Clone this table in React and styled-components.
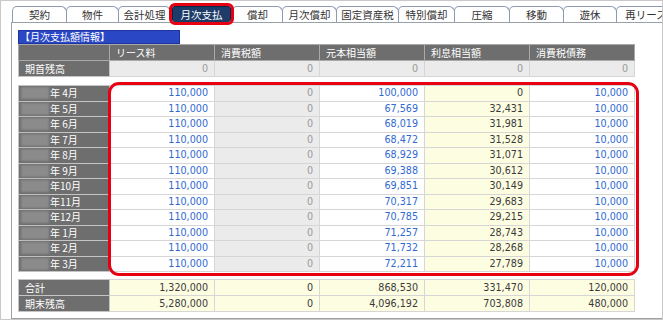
import React from "react";
import styled, { createGlobalStyle, css } from "styled-components";

const GlobalStyle = createGlobalStyle`
    html, body {
        margin : 0;
        padding : 0;
        background : #ffffff;
    }
`

const Frame = styled.div`
    width : 663px;
    height : 320px;
    box-sizing : border-box;
    border : 1px solid #c8c8c8;
    padding : 5px 0 0 10px;
    display : flex;
    flex-direction : column;
    overflow : hidden;
    font-family : "Noto Sans CJK JP", "DejaVu Sans", sans-serif;
`

const TabBar = styled.div`
    display : flex;
    height : 16px;
    padding-left : 1px;
    flex-shrink : 0;
`

const Tab = styled.div`
    flex-shrink : 0;
    box-sizing : border-box;
    width : ${p => p.$w}px;
    height : 16px;
    margin-right : -1px;
    border : 1px solid #8c9ab2;
    border-bottom : none;
    border-radius : 5px 6px 0 0;
    background : #ffffff;
    color : #333333;
    font-size : 10.5px;
    line-height : 15px;
    text-align : center;
    white-space : nowrap;
    ${p => p.$active && css`
        width : ${p.$w - 4}px;
        margin : 0 1px 0 2px;
        background : #1d3c69;
        border-color : #0f2446;
        border-radius : 3px;
        color : #ffffff;
        outline : 3px solid #e60012;
        outline-offset : 0px;
        position : relative;
        z-index : 1;
    `}
`

const Panel = styled.div`
    flex : 1;
    border-top : 1px solid #9aa0a8;
    border-left : 1px solid #a0a0a0;
    border-bottom : 1px solid #a0a0a0;
    padding : 7px 0 0 6px;
`

const Title = styled.div`
    width : 162px;
    height : 14px;
    box-sizing : border-box;
    background : #2a47c6;
    border : 1px solid #1e35a0;
    color : #ffffff;
    font-size : 10px;
    line-height : 12px;
    padding-left : 1px;
    white-space : nowrap;
`

const Block = styled.div`
    position : relative;
    margin-top : ${p => p.$gap || 0}px;
    width : 616px;
`

const Table = styled.table`
    width : 616px;
    table-layout : fixed;
    border-collapse : collapse;
`

const Cell = styled.td`
    height : ${p => p.$h}px;
    padding : 0 6px;
    box-sizing : border-box;
    border : 1px solid #d6d6d6;
    font-size : 9.6px;
    line-height : 12px;
    white-space : nowrap;
    text-align : right;
    vertical-align : middle;
    font-family : "DejaVu Sans", sans-serif;
    ${p => p.$kind === "label" && css`
        background : #6e6e6e;
        border-color : #c4c4c4;
        color : #ffffff;
        text-align : left;
        font-family : "Noto Sans CJK JP", sans-serif;
        font-size : 10px;
        padding-left : ${p.$month ? 2 : 6}px;
    `}
    ${p => p.$kind === "head" && css`
        background : #6e6e6e;
        border-color : #a9a9a9;
        color : #ffffff;
        text-align : left;
        font-family : "Noto Sans CJK JP", sans-serif;
        font-size : 10px;
    `}
    ${p => p.$kind === "gray" && css`
        background : #ebebeb;
        color : #9a9a9a;
    `}
    ${p => p.$kind === "blue" && css`
        background : #ffffff;
        color : #2f6ad2;
    `}
    ${p => p.$kind === "yellow" && css`
        background : #fdfde2;
        color : #3a3a3a;
    `}
`

const Smudge = styled.span`
    display : inline-block;
    width : 28px;
    height : 12px;
    margin-right : 1px;
    vertical-align : -2px;
    background : #8b8b8b;
    filter : blur(1.2px);
`

const Highlight = styled.div`
    position : absolute;
    left : 90px;
    top : -3px;
    right : -5px;
    bottom : -4px;
    border : 3px solid #e60012;
    border-radius : 11px;
    pointer-events : none;
`

const tabs = [
    ["契約", 55], ["物件", 53], ["会計処理", 53], ["月次支払", 63, true],
    ["償却", 51], ["月次償却", 55], ["固定資産税", 63], ["特別償却", 57],
    ["圧縮", 56], ["移動", 55], ["遊休", 54], ["再リース", 60],
]

const heads = ["リース料", "消費税額", "元本相当額", "利息相当額", "消費税債務"]

const months = [
    ["年 4月", "100,000", "0"],
    ["年 5月", "67,569", "32,431"],
    ["年 6月", "68,019", "31,981"],
    ["年 7月", "68,472", "31,528"],
    ["年 8月", "68,929", "31,071"],
    ["年 9月", "69,388", "30,612"],
    ["年10月", "69,851", "30,149"],
    ["年11月", "70,317", "29,683"],
    ["年12月", "70,785", "29,215"],
    ["年 1月", "71,257", "28,743"],
    ["年 2月", "71,732", "28,268"],
    ["年 3月", "72,211", "27,789"],
]

const totals = [
    ["合計", "1,320,000", "0", "868,530", "331,470", "120,000"],
    ["期末残高", "5,280,000", "0", "4,096,192", "703,808", "480,000"],
]

const Cols = () => (
    <colgroup>
        <col style={{width : 91}} />
        {heads.map(h => <col key={h} style={{width : 105}} />)}
    </colgroup>
)

const App = () => {
    return(
        <Frame>
            <GlobalStyle />
            <TabBar>
                {tabs.map(([name, w, active]) => (
                    <Tab key={name} $w={w} $active={active}>{name}</Tab>
                ))}
            </TabBar>
            <Panel>
                <Title>【月次支払額情報】</Title>
                <Block>
                    <Table>
                        <Cols />
                        <tbody>
                            <tr>
                                <Cell $kind="head" $h={16}></Cell>
                                {heads.map(h => <Cell key={h} $kind="head" $h={16}>{h}</Cell>)}
                            </tr>
                            <tr>
                                <Cell $kind="label" $h={16}>期首残高</Cell>
                                {heads.map(h => <Cell key={h} $kind="gray" $h={16}>0</Cell>)}
                            </tr>
                        </tbody>
                    </Table>
                </Block>
                <Block $gap={8}>
                    <Table>
                        <Cols />
                        <tbody>
                            {months.map(([label, principal, interest]) => (
                                <tr key={label}>
                                    <Cell $kind="label" $month $h={15.5}><Smudge />{label}</Cell>
                                    <Cell $kind="blue" $h={15.5}>110,000</Cell>
                                    <Cell $kind="gray" $h={15.5}>0</Cell>
                                    <Cell $kind="blue" $h={15.5}>{principal}</Cell>
                                    <Cell $kind="yellow" $h={15.5}>{interest}</Cell>
                                    <Cell $kind="blue" $h={15.5}>10,000</Cell>
                                </tr>
                            ))}
                        </tbody>
                    </Table>
                    <Highlight />
                </Block>
                <Block $gap={7}>
                    <Table>
                        <Cols />
                        <tbody>
                            {totals.map(([label, ...vals]) => (
                                <tr key={label}>
                                    <Cell $kind="label" $h={16}>{label}</Cell>
                                    {vals.map((v, i) => <Cell key={i} $kind="yellow" $h={16}>{v}</Cell>)}
                                </tr>
                            ))}
                        </tbody>
                    </Table>
                </Block>
            </Panel>
        </Frame>
    )
}

export default App
